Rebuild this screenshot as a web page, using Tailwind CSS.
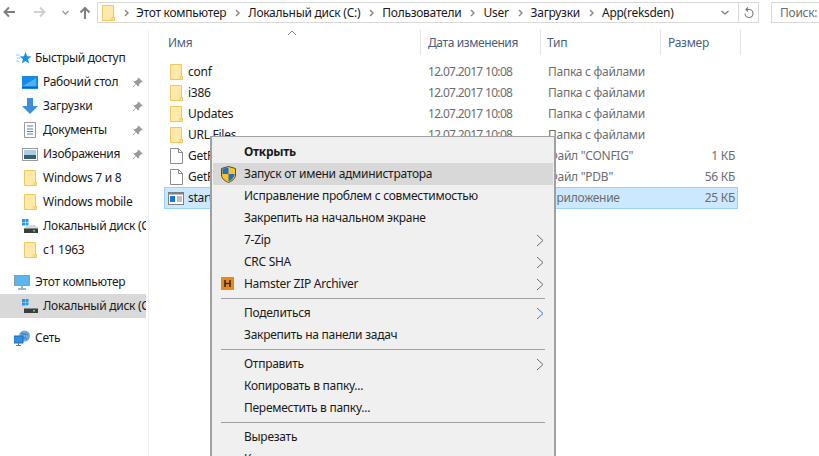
<!DOCTYPE html>
<html lang="ru"><head><meta charset="utf-8">
<script src="https://cdn.jsdelivr.net/npm/@tailwindcss/browser@4"></script></head>
<body class="w-[819px] h-[456px] overflow-hidden bg-white relative font-['Noto_Sans','Open_Sans',sans-serif] text-[12px] leading-[16px] tracking-[-0.27px] text-[#1a1a1a]">
<svg class="hidden"><defs>
<symbol id="folder" viewBox="0 0 13 16"><path d="M.5.5H11.500V12.500H12.500V15.500H.5Z" fill="#ffe9a8" stroke="#ecc85e"/><path d="M10 15V12.500H12" fill="none" stroke="#ecc85e"/></symbol>
<symbol id="pin" viewBox="0 0 12 12"><path d="M7 1l4 4-1.500.5-2 2-.5 2.500-5-5 2.500-.5 2-2zM4 8l-3 3" fill="#9a9a9a" stroke="#9a9a9a"/></symbol>
<symbol id="drive" viewBox="0 0 16 16"><rect x="0" y="1" width="3" height="3" fill="#1e9be8"/><rect x="3.500" y="1" width="3" height="3" fill="#1e9be8"/><rect x="0" y="4.500" width="3" height="3" fill="#1e9be8"/><rect x="3.500" y="4.500" width="3" height="3" fill="#1e9be8"/><path d="M3 9l3-2h7l3 3v1H2z" fill="#d9d9d9"/><rect x="2" y="10.500" width="14" height="4.500" fill="#3c3c3c"/><rect x="11" y="12" width="2" height="1.500" fill="#4ee06a"/></symbol>
<symbol id="doc" viewBox="0 0 13 16"><path d="M.5.5H8.500L12.500 4.500V15.500H.5Z" fill="#fff" stroke="#8c8c8c"/><path d="M8.500.5V4.500H12.500" fill="none" stroke="#8c8c8c"/></symbol>
<symbol id="chev" viewBox="0 0 8 13"><path d="M1 1l6 5.500-6 5.500" fill="none" stroke="#6d6d6d"/></symbol>
<symbol id="crumb" viewBox="0 0 5 8"><path d="M1 1l3 3-3 3" fill="none" stroke="#8a8a8a" stroke-width="1.500"/></symbol>
</defs></svg>

<!-- toolbar -->
<div class="h-[30px] flex items-start pt-[2px]">
  <div class="w-[97px] h-[20px] flex items-center shrink-0">
    <svg class="ml-[3px] w-[13px] h-[12px]" viewBox="0 0 13 12"><path d="M12 6H2M6 1.500L1.500 6 6 10.500" fill="none" stroke="#7f7f7f" stroke-width="2"/></svg>
    <svg class="ml-[17px] w-[13px] h-[12px]" viewBox="0 0 13 12"><path d="M1 6H11M7 1.500L11.500 6 7 10.500" fill="none" stroke="#d0d0d0" stroke-width="2"/></svg>
    <svg class="ml-[16px] w-[7px] h-[5px]" viewBox="0 0 7 5"><path d="M.5 1l3 3 3-3" fill="none" stroke="#9a9a9a" stroke-width="1.300"/></svg>
    <svg class="ml-[10px] w-[12px] h-[13px]" viewBox="0 0 12 13"><path d="M6 13V2M1.500 6.500L6 2l4.500 4.500" fill="none" stroke="#7f7f7f" stroke-width="2"/></svg>
  </div>
  <div class="w-[662px] h-[21px] border border-[#d9d9d9] flex items-center shrink-0">
    <svg class="ml-[4px] w-[13px] h-[16px]"><use href="#folder"/></svg>
    <svg class="ml-[9px] w-[5px] h-[8px]"><use href="#crumb"/></svg>
    <span class="ml-[7px] whitespace-nowrap">Этот компьютер</span>
    <svg class="ml-[9px] w-[5px] h-[8px]"><use href="#crumb"/></svg>
    <span class="ml-[8px] whitespace-nowrap">Локальный диск (C:)</span>
    <svg class="ml-[9px] w-[5px] h-[8px]"><use href="#crumb"/></svg>
    <span class="ml-[8px] whitespace-nowrap">Пользователи</span>
    <svg class="ml-[9px] w-[5px] h-[8px]"><use href="#crumb"/></svg>
    <span class="ml-[8px] whitespace-nowrap">User</span>
    <svg class="ml-[9px] w-[5px] h-[8px]"><use href="#crumb"/></svg>
    <span class="ml-[8px] whitespace-nowrap">Загрузки</span>
    <svg class="ml-[9px] w-[5px] h-[8px]"><use href="#crumb"/></svg>
    <span class="ml-[8px] whitespace-nowrap">App(reksden)</span>
    <svg class="ml-auto w-[8px] h-[5px]" viewBox="0 0 8 5"><path d="M.5 1l3.500 3 3.500-3" fill="none" stroke="#777" stroke-width="1.300"/></svg>
    <div class="ml-[9px] w-[20px] h-full border-l border-[#d9d9d9] flex items-center justify-center">
      <svg class="w-[11px] h-[12px]" viewBox="0 0 11 12"><path d="M3 2.500H6A4 4 0 1 1 2 6.500M5 .5L3 2.500 5 4.500" fill="none" stroke="#777" stroke-width="1.100"/></svg>
    </div>
  </div>
  <div class="ml-[12px] flex-1 h-[21px] border border-r-0 border-[#d9d9d9] flex items-center pl-[8px] text-[#6d6d6d] whitespace-nowrap">Поиск:</div>
</div>

<div class="flex h-[426px]">
  <!-- sidebar -->
  <div class="w-[149px] shrink-0 border-r border-[#f0f0f0] pt-[16px] overflow-hidden">
    <div class="h-[24px] flex items-center pl-[16px]">
      <svg class="w-[16px] h-[15px]" viewBox="0 0 16 15"><path d="M9.500 1l1.600 4.300L15.500 5.500 12 8.200l1.200 4.300-3.700-2.500-3.700 2.500L7 8.200 3.500 5.500l4.400-.2z" fill="#1e8fe0"/><path d="M0 4h4M1 7h3M0 10h3" stroke="#9ccbef"/></svg>
      <span class="ml-[3px] whitespace-nowrap">Быстрый доступ</span>
    </div>
    <div class="h-[24px] flex items-center pl-[22px]">
      <svg class="w-[16px] h-[13px] shrink-0" viewBox="0 0 16 13"><rect width="16" height="13" fill="#1789e6"/><path d="M0 11.500H16" stroke="#0a5ea8"/><path d="M1 10L14 2V10z" fill="#4db3f5"/></svg>
      <span class="ml-[5px] w-[82px] whitespace-nowrap">Рабочий стол</span>
      <svg class="ml-[7px] w-[11px] h-[11px]"><use href="#pin"/></svg>
    </div>
    <div class="h-[24px] flex items-center pl-[22px]">
      <svg class="w-[16px] h-[16px] shrink-0" viewBox="0 0 16 16"><path d="M5 0h6v8h5l-8 8-8-8h5z" fill="#3d8fdc"/></svg>
      <span class="ml-[5px] w-[82px] whitespace-nowrap">Загрузки</span>
      <svg class="ml-[7px] w-[11px] h-[11px]"><use href="#pin"/></svg>
    </div>
    <div class="h-[24px] flex items-center pl-[24px]">
      <svg class="w-[12px] h-[16px] shrink-0" viewBox="0 0 12 16"><path d="M.5.500H11.500V15.500H.5Z" fill="#fff" stroke="#9b9b9b"/><path d="M3 4h6M3 7h6M3 9.500h6M3 12h6" stroke="#5a7fa8"/></svg>
      <span class="ml-[7px] w-[82px] whitespace-nowrap">Документы</span>
      <svg class="ml-[7px] w-[11px] h-[11px]"><use href="#pin"/></svg>
    </div>
    <div class="h-[24px] flex items-center pl-[22px]">
      <svg class="w-[16px] h-[13px] shrink-0" viewBox="0 0 16 13"><rect x=".5" y=".5" width="15" height="12" fill="#fff" stroke="#9b9b9b"/><rect x="2" y="2" width="12" height="5" fill="#a9cfe6"/><rect x="2" y="7" width="12" height="4" fill="#37606f"/></svg>
      <span class="ml-[5px] w-[82px] whitespace-nowrap">Изображения</span>
      <svg class="ml-[7px] w-[11px] h-[11px]"><use href="#pin"/></svg>
    </div>
    <div class="h-[24px] flex items-center pl-[24px]"><svg class="w-[13px] h-[16px]"><use href="#folder"/></svg><span class="ml-[6px] whitespace-nowrap">Windows 7 и 8</span></div>
    <div class="h-[24px] flex items-center pl-[24px]"><svg class="w-[13px] h-[16px]"><use href="#folder"/></svg><span class="ml-[6px] whitespace-nowrap">Windows mobile</span></div>
    <div class="h-[24px] flex items-center pl-[22px] w-[146px] overflow-hidden"><svg class="w-[16px] h-[16px] shrink-0"><use href="#drive"/></svg><span class="ml-[5px] whitespace-nowrap">Локальный диск (C:)</span></div>
    <div class="h-[24px] flex items-center pl-[24px]"><svg class="w-[13px] h-[16px]"><use href="#folder"/></svg><span class="ml-[6px] whitespace-nowrap">с1 1963</span></div>
    <div class="h-[24px] mt-[8px] flex items-center pl-[14px]">
      <svg class="w-[16px] h-[15px] shrink-0" viewBox="0 0 16 15"><rect x=".5" y=".5" width="15" height="10" fill="#5cb6ee" stroke="#7f9fb5"/><path d="M8 11v2M4 14h8" stroke="#7f9fb5" stroke-width="1.500"/></svg>
      <span class="ml-[5px] whitespace-nowrap">Этот компьютер</span>
    </div>
    <div class="h-[24px] w-[146px] bg-[#d9d9d9] flex items-center pl-[22px] overflow-hidden"><svg class="w-[16px] h-[16px] shrink-0"><use href="#drive"/></svg><span class="ml-[5px] whitespace-nowrap">Локальный диск (C:)</span></div>
    <div class="h-[24px] mt-[8px] flex items-center pl-[14px]">
      <svg class="w-[17px] h-[16px] shrink-0" viewBox="0 0 17 16"><circle cx="10.500" cy="6" r="5.500" fill="#6fa8dc"/><path d="M7 3c2 2 5 0 7 2M8 9c1-2 4-1 5 0" stroke="#2f6fb0" fill="none"/><rect x="0" y="6" width="9" height="7" fill="#2f8fe0" stroke="#1f6fb8"/><path d="M4.500 13v2M2 15.500h5" stroke="#777"/></svg>
      <span class="ml-[4px] whitespace-nowrap">Сеть</span>
    </div>
  </div>

  <!-- file list -->
  <div class="flex-1 relative pl-[15px]">
    <svg class="absolute left-[138px] top-[0px] w-[10px] h-[6px]" viewBox="0 0 10 6"><path d="M1 5l4-4 4 4" fill="none" stroke="#8a8a8a"/></svg>
    <div class="h-[25px] flex text-[#4c607a]">
      <div class="w-[257px] pl-[4px] border-r border-[#e5e5e5] flex items-center">Имя</div>
      <div class="w-[120px] pl-[7px] border-r border-[#e5e5e5] flex items-center tracking-[-0.4px]">Дата изменения</div>
      <div class="w-[120px] pl-[6px] border-r border-[#e5e5e5] flex items-center">Тип</div>
      <div class="w-[80px] pl-[7px] border-r border-[#e5e5e5] flex items-center">Размер</div>
    </div>
    <div class="mt-[6px]">
      <div class="h-[21px] w-[574px] flex items-center"><div class="w-[258px] pl-[6px] flex items-center"><svg class="w-[13px] h-[16px]"><use href="#folder"/></svg><span class="ml-[5px]">conf</span></div><div class="w-[120px] pl-[6px] text-[#6d6d6d] tracking-[-0.68px]">12.07.2017 10:08</div><div class="w-[120px] pl-[6px] text-[#6d6d6d]">Папка с файлами</div></div>
      <div class="h-[21px] w-[574px] flex items-center"><div class="w-[258px] pl-[6px] flex items-center"><svg class="w-[13px] h-[16px]"><use href="#folder"/></svg><span class="ml-[5px]">i386</span></div><div class="w-[120px] pl-[6px] text-[#6d6d6d] tracking-[-0.68px]">12.07.2017 10:08</div><div class="w-[120px] pl-[6px] text-[#6d6d6d]">Папка с файлами</div></div>
      <div class="h-[21px] w-[574px] flex items-center"><div class="w-[258px] pl-[6px] flex items-center"><svg class="w-[13px] h-[16px]"><use href="#folder"/></svg><span class="ml-[5px]">Updates</span></div><div class="w-[120px] pl-[6px] text-[#6d6d6d] tracking-[-0.68px]">12.07.2017 10:08</div><div class="w-[120px] pl-[6px] text-[#6d6d6d]">Папка с файлами</div></div>
      <div class="h-[21px] w-[574px] flex items-center"><div class="w-[258px] pl-[6px] flex items-center"><svg class="w-[13px] h-[16px]"><use href="#folder"/></svg><span class="ml-[5px]">URL Files</span></div><div class="w-[120px] pl-[6px] text-[#6d6d6d] tracking-[-0.68px]">12.07.2017 10:08</div><div class="w-[120px] pl-[6px] text-[#6d6d6d]">Папка с файлами</div></div>
      <div class="h-[21px] w-[574px] flex items-center"><div class="w-[258px] pl-[6px] flex items-center"><svg class="w-[13px] h-[16px]"><use href="#doc"/></svg><span class="ml-[5px]">GetFile</span></div><div class="w-[120px]"></div><div class="w-[120px] pl-[6px] text-[#6d6d6d] whitespace-nowrap">Файл "CONFIG"</div><div class="w-[73px] text-right text-[#6d6d6d]">1 КБ</div></div>
      <div class="h-[21px] w-[574px] flex items-center"><div class="w-[258px] pl-[6px] flex items-center"><svg class="w-[13px] h-[16px]"><use href="#doc"/></svg><span class="ml-[5px]">GetFile</span></div><div class="w-[120px]"></div><div class="w-[120px] pl-[6px] text-[#6d6d6d] whitespace-nowrap">Файл "PDB"</div><div class="w-[73px] text-right text-[#6d6d6d]">56 КБ</div></div>
      <div class="h-[22px] w-[574px] flex items-center bg-[#cce8ff] border border-[#99d1ff]"><div class="w-[257px] pl-[3px] flex items-center"><svg class="w-[16px] h-[13px]" viewBox="0 0 16 13"><rect x=".5" y=".5" width="15" height="12" fill="#fff" stroke="#7f7f7f"/><rect x=".5" y=".5" width="15" height="2" fill="#7f7f7f"/><rect x="2" y="4" width="5" height="6" fill="#1877d2"/><path d="M9 5h5M9 7h5M9 9h5" stroke="#7f7f7f"/></svg><span class="ml-[4px]">start</span></div><div class="w-[120px]"></div><div class="w-[120px] pl-[6px] text-[#6d6d6d] whitespace-nowrap">Приложение</div><div class="w-[73px] text-right text-[#6d6d6d]">25 КБ</div></div>
    </div>
  </div>
</div>

<!-- context menu -->
<div class="absolute left-[210px] top-[136px] w-[346px] h-[330px] bg-[#f0f0f0] border-2 border-b-0 border-[#a0a0a0] border-t-1 pt-[4px] px-[1px] overflow-hidden">
  <div class="h-[22px] flex items-center pl-[31px] font-bold">Открыть</div>
  <div class="h-[22px] flex items-center bg-[#d8d8d8] relative pl-[31px]">
    <svg class="absolute left-[8px] top-[3px] w-[15px] h-[17px]" viewBox="0 0 15 17"><path d="M7.500 .5L14.500 2.500V9C14.500 13 10 15.500 7.500 16.500 5 15.500 .5 13 .5 9V2.500Z" fill="#ffc21e" stroke="#4a4a4a"/><path d="M7.500 1.500V8H1.500V2.800ZM7.500 8H13.500C13.500 12 9.500 14.500 7.500 15.500Z" fill="#1c6fd0"/></svg>
    Запуск от имени администратора</div>
  <div class="h-[22px] flex items-center pl-[31px]">Исправление проблем с совместимостью</div>
  <div class="h-[22px] flex items-center pl-[31px]">Закрепить на начальном экране</div>
  <div class="h-[22px] flex items-center pl-[31px] justify-between pr-[9px]">7-Zip<svg class="w-[8px] h-[13px]"><use href="#chev"/></svg></div>
  <div class="h-[22px] flex items-center pl-[31px] justify-between pr-[9px]">CRC SHA<svg class="w-[8px] h-[13px]"><use href="#chev"/></svg></div>
  <div class="h-[22px] flex items-center pl-[31px] justify-between pr-[9px] relative">
    <svg class="absolute left-[8px] top-[4px] w-[13px] h-[13px]" viewBox="0 0 13 13"><rect width="13" height="13" fill="#e8891c"/><path d="M4 3v7M9 3v7M4 6.500h5" stroke="#3a2a10" stroke-width="1.600"/></svg>
    Hamster ZIP Archiver<svg class="w-[8px] h-[13px]"><use href="#chev"/></svg></div>
  <div class="h-[1px] my-[3px] ml-[8px] mr-[8px] bg-[#a0a0a0]"></div>
  <div class="h-[22px] flex items-center pl-[31px] justify-between pr-[9px] mt-[3px]">Поделиться<svg class="w-[8px] h-[13px]" viewBox="0 0 8 13"><path d="M1 1l6 5.500-6 5.500" fill="none" stroke="#2a7fd0"/></svg></div>
  <div class="h-[22px] flex items-center pl-[31px]">Закрепить на панели задач</div>
  <div class="h-[1px] my-[3px] ml-[8px] mr-[8px] bg-[#a0a0a0]"></div>
  <div class="h-[22px] flex items-center pl-[31px] justify-between pr-[9px] mt-[3px]">Отправить<svg class="w-[8px] h-[13px]"><use href="#chev"/></svg></div>
  <div class="h-[22px] flex items-center pl-[31px]">Копировать в папку...</div>
  <div class="h-[22px] flex items-center pl-[31px]">Переместить в папку...</div>
  <div class="h-[1px] my-[3px] ml-[8px] mr-[8px] bg-[#a0a0a0]"></div>
  <div class="h-[22px] flex items-center pl-[31px] mt-[3px]">Вырезать</div>
  <div class="h-[22px] flex items-center pl-[31px]">Копировать</div>
</div>
</body></html>
